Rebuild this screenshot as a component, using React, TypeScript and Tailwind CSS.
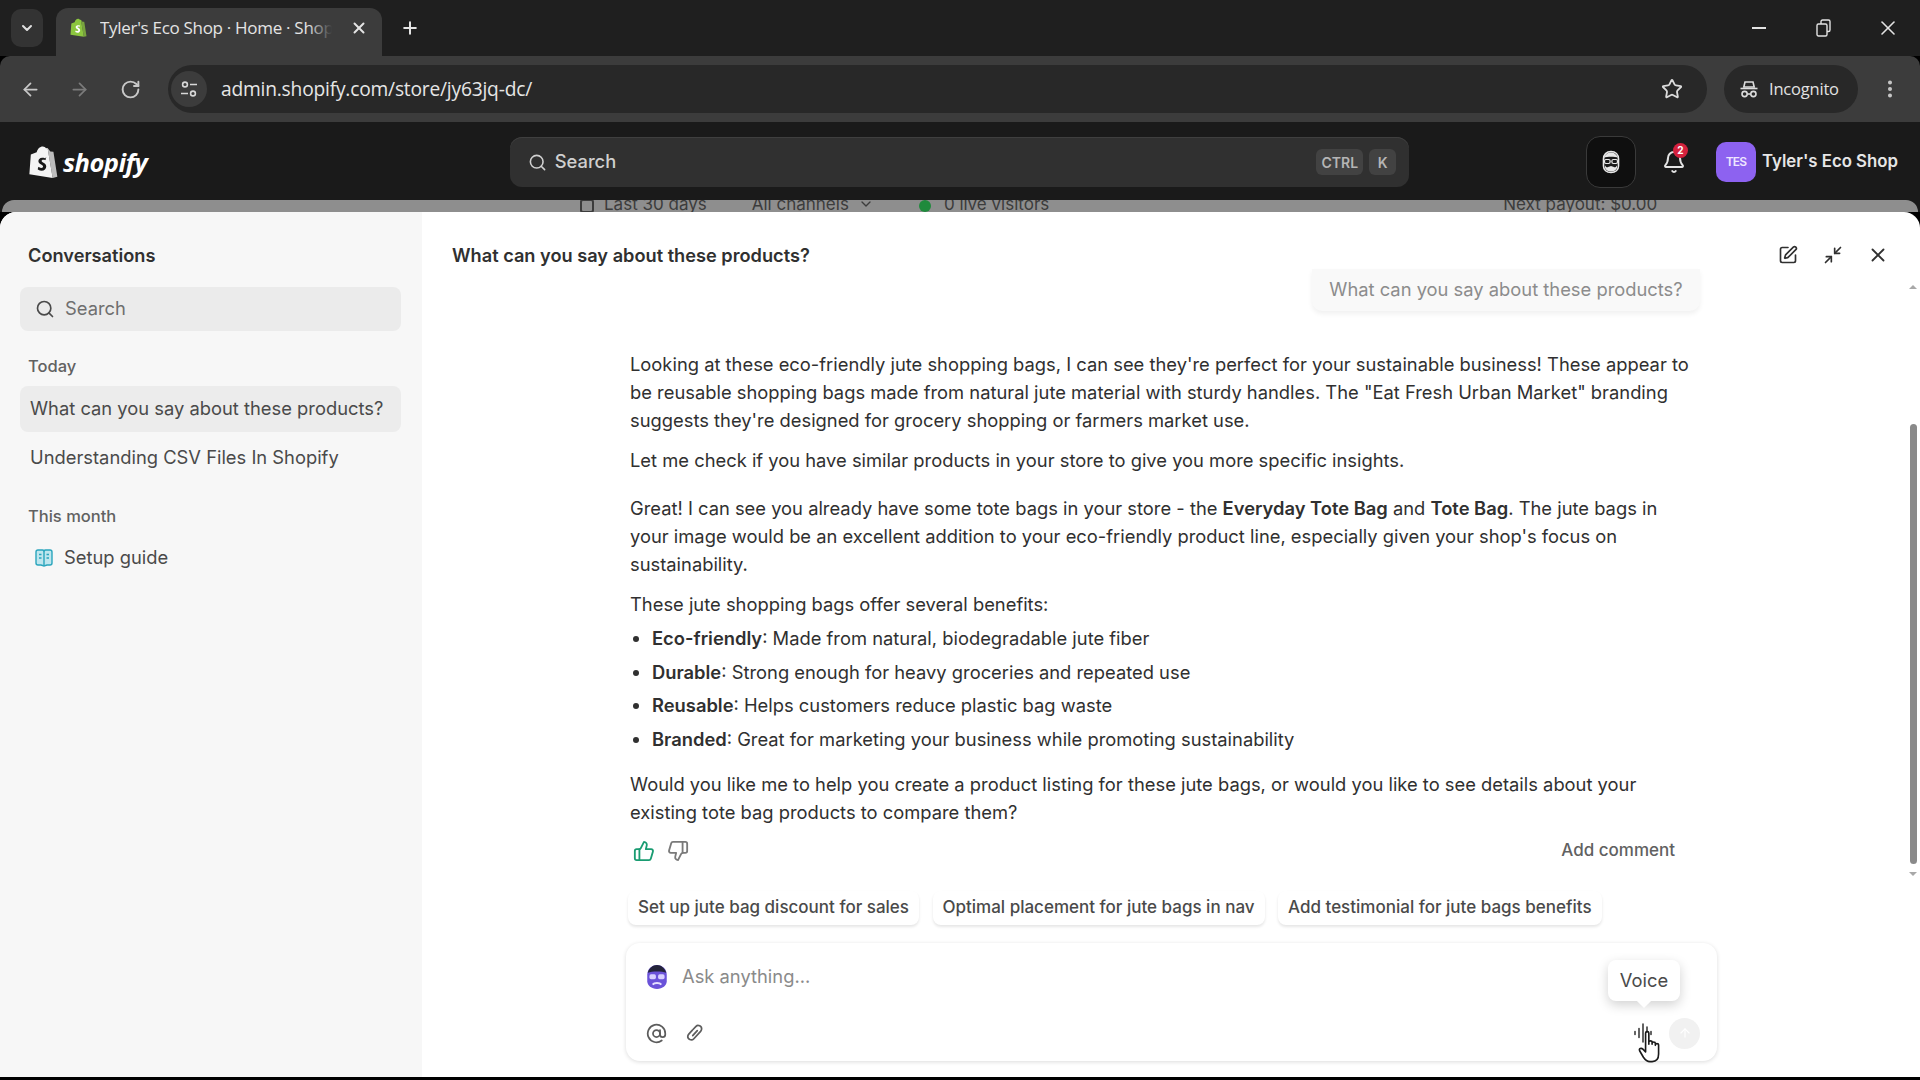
import React from 'react';
import {
  ArrowLeft, ArrowRight, AtSign, Bell, ChevronDown, Minimize2, MoreVertical,
  Plus, RotateCw, Search, SquarePen, Star, ThumbsDown, ThumbsUp, X, ArrowUp,
} from 'lucide-react';

function BagIcon({ size, body, mark }: { size: number; body: string; mark: string }) {
  return (
    <svg width={size} height={size} viewBox="0 0 24 24" fill="none">
      <path d="M4 6.5 8 5c.6-2.4 2.2-4 4.2-4 1 0 1.7.5 2.2 1.3l1.1-.3L19 22.6 3 20 4 6.5Z" fill={body} />
      <path d="M15.5 2 19 22.6l3.2-.8L19.5 4.6l-2.1-.2-1.9-2.4Z" fill={body} opacity="0.75" />
      <path d="M13.8 9.2s-.9-.5-2-.4c-1.8.1-2.6 1.2-2.6 2.3 0 2.1 3.2 2.3 3.2 3.6 0 .5-.4 1-1.2 1-1 0-2-.8-2-.8l-.5 1.7s1 1.1 2.7 1.1c1.9 0 3.2-1.3 3.2-3.1 0-2.5-3.2-2.7-3.2-3.7 0-.3.3-.8 1.2-.8.8 0 1.5.3 1.5.3l.5-2.2Z" fill={mark} />
    </svg>
  );
}

function SiteInfoIcon() {
  return (
    <svg width="20" height="20" viewBox="0 0 20 20" fill="none" stroke="#d8d8d8" strokeWidth="1.6">
      <circle cx="6" cy="5.5" r="2.4" />
      <path d="M11 5.5h7M2 14.5h7" />
      <circle cx="14" cy="14.5" r="2.4" />
    </svg>
  );
}

function IncognitoIcon() {
  return (
    <svg width="20" height="20" viewBox="0 0 20 20" fill="none" stroke="#dcdcdc" strokeWidth="1.6">
      <path d="M6 3h8l1.2 5H4.8L6 3Z" />
      <path d="M1.5 9.5h17" />
      <circle cx="5.6" cy="15" r="2.6" />
      <circle cx="14.4" cy="15" r="2.6" />
      <path d="M8.2 15h3.6" />
    </svg>
  );
}

function RestoreIcon() {
  return (
    <svg width="16" height="18" viewBox="0 0 16 18" fill="none" stroke="#e2e2e2" strokeWidth="1.4">
      <rect x="1" y="5" width="10" height="12" rx="1.5" />
      <path d="M5 5V2.5C5 1.7 5.7 1 6.5 1h6c.9 0 1.5.7 1.5 1.5V11c0 .8-.6 1.5-1.5 1.5H11" />
    </svg>
  );
}

function AttachIcon() {
  return (
    <svg width="20" height="20" viewBox="0 0 20 20" fill="none" stroke="#5c5c5c" strokeWidth="1.7" strokeLinecap="round">
      <path d="M8 6.500 11 3.300c2-2 6-.2 5.600 2.900-.1.900-.5 1.600-1 2.200l-7 7.600c-2 2.100-6.200.4-5.800-2.800.1-.8.500-1.500 1-2.100l3.600-3.900" />
      <path d="m12.300 7.600-4.600 5" />
    </svg>
  );
}

function VoiceIcon() {
  return (
    <svg width="20" height="22" viewBox="0 0 20 22" fill="none" stroke="#303030" strokeWidth="1.500" strokeLinecap="round">
      <path d="M2 9.500v3M6 6.500v9M10 2v18M14 5v12M18 9.500v3" />
    </svg>
  );
}

function SidekickFace({ size, dark }: { size: number; dark?: boolean }) {
  if (dark) {
    return (
      <svg width={size} height={size} viewBox="0 0 24 24" fill="none">
        <path d="M4.500 9c0-4.500 3-7.500 7.500-7.500s7.500 3 7.500 7.500v7c0 4-3 6.500-7.500 6.500S4.500 20 4.500 16V9Z" fill="#1a1a1a" stroke="#e8e8e8" strokeWidth="1.600" />
        <path d="M5 7.500C7 3.500 9.500 2.500 12 2.500S17 3.500 19 7.500c-3-1-11-1-14 0Z" fill="#e8e8e8" />
        <rect x="5.500" y="9.500" width="5.600" height="4" rx="1.400" fill="#1a1a1a" stroke="#e8e8e8" strokeWidth="1.200" />
        <rect x="12.900" y="9.500" width="5.600" height="4" rx="1.400" fill="#1a1a1a" stroke="#e8e8e8" strokeWidth="1.200" />
        <path d="M6 15.500c2 3 2.500 1.500 6 .5 3.500 1 4 2.500 6-.5v2.500c-1 2.500-3.500 3.500-6 3.500s-5-1-6-3.500v-2.500Z" fill="#e8e8e8" />
      </svg>
    );
  }
  return (
    <svg width={size} height={size} viewBox="0 0 24 24" fill="none">
      <path d="M3 10c0-5 4-9 9-9s9 4 9 9v6c0 4-4 7-9 7s-9-3-9-7v-6Z" fill="#6a52d9" />
      <path d="M3.500 8C5 3.500 8.500 1 12 1s7 2.500 8.500 7c-4-1.500-13-1.500-17 0Z" fill="#24243a" />
      <rect x="5" y="9.500" width="6" height="4.500" rx="1.500" fill="#d8d0ff" />
      <rect x="13" y="9.500" width="6" height="4.500" rx="1.500" fill="#d8d0ff" />
      <path d="M8 19c1.500-2 6.500-2 8 0" stroke="#e5e0ff" strokeWidth="1.800" />
    </svg>
  );
}

function SetupGuideIcon() {
  return (
    <svg width="20" height="20" viewBox="0 0 20 20" fill="none">
      <path d="M2 4c0-1 .8-2 2-2h4.500c.7 0 1.200.3 1.500.8.300-.5.800-.8 1.500-.8H16c1.200 0 2 1 2 2v11c0 1-.8 2-2 2h-3l-3 1-3-1H4c-1.200 0-2-1-2-2V4Z" fill="#bfe6ee" stroke="#2aa5bd" strokeWidth="1.400" />
      <path d="M10 3v14M5 6.500h2.500M5 10h2.500M12.500 6.500H15M12.500 10H15" stroke="#2aa5bd" strokeWidth="1.400" />
    </svg>
  );
}

const bullets = [
  ['Eco-friendly', ': Made from natural, biodegradable jute fiber'],
  ['Durable', ': Strong enough for heavy groceries and repeated use'],
  ['Reusable', ': Helps customers reduce plastic bag waste'],
  ['Branded', ': Great for marketing your business while promoting sustainability'],
];

const suggestions = [
  'Set up jute bag discount for sales',
  'Optimal placement for jute bags in nav',
  'Add testimonial for jute bags benefits',
];

export default function App() {
  return (
    <div className="h-[1080px] w-[1920px] overflow-hidden bg-black flex flex-col font-['Inter',sans-serif]">
      {/* Browser tab strip */}
      <div className="h-[56px] shrink-0 bg-[#1f1f1f] flex items-end pl-[11px]">
        <div className="w-[32px] h-[38px] mb-[9px] rounded-[10px] bg-[#333333] flex items-center justify-center">
          <ChevronDown size={16} strokeWidth={3} className="text-[#e0e0e0]" />
        </div>
        <div className="ml-[13px] w-[326px] h-[48px] rounded-t-[12px] bg-[#3c3c3c] flex items-center pl-[12px] pr-[14px] pb-[8px]">
          <BagIcon size={20} body="#8cc63f" mark="#ffffff" />
          <span className="relative ml-[12px] w-[232px] overflow-hidden whitespace-nowrap text-[17px] text-[#e4e4e4] font-['Open_Sans',sans-serif] tracking-[-0.3px]">
            Tyler's Eco Shop · Home · Shopify
            <span className="absolute right-0 top-0 bottom-0 w-[24px] bg-gradient-to-r from-transparent to-[#3c3c3c]" />
          </span>
          <X size={18} strokeWidth={2.6} className="ml-auto text-[#e4e4e4]" />
        </div>
        <Plus size={20} strokeWidth={2.4} className="ml-[18px] mb-[18px] text-[#e4e4e4]" />
        <div className="ml-auto h-[56px] flex items-center text-[#e2e2e2]">
          <div className="w-[14px] h-[2px] bg-[#e2e2e2] mr-[50px]" />
          <RestoreIcon />
          <X size={24} strokeWidth={1.6} className="ml-[44px] mr-[20px]" />
        </div>
      </div>

      {/* Browser toolbar */}
      <div className="h-[66px] shrink-0 bg-[#3c3c3c] rounded-t-[10px] flex items-center pl-[20px] pr-[19px]">
        <ArrowLeft size={21} className="text-[#c8c8c8]" />
        <ArrowRight size={21} className="ml-[28px] text-[#7b7b7b]" />
        <RotateCw size={21} strokeWidth={2.2} className="ml-[30px] text-[#c8c8c8]" />
        <div className="ml-[27px] w-[1539px] h-[48px] rounded-full bg-[#282828] flex items-center pl-[3px] pr-[24px]">
          <div className="w-[36px] h-[36px] rounded-full bg-[#3c3c3c] flex items-center justify-center">
            <SiteInfoIcon />
          </div>
          <span className="ml-[14px] text-[19.200px] text-[#e6e6e6] font-['Open_Sans',sans-serif] tracking-[-0.2px]">
            admin.shopify.com/store/jy63jq-dc/
          </span>
          <Star size={22} strokeWidth={2} className="ml-auto text-[#dcdcdc]" />
        </div>
        <div className="ml-[17px] w-[134px] h-[48px] rounded-full bg-[#282828] flex items-center pl-[15px]">
          <IncognitoIcon />
          <span className="ml-[10px] text-[16.500px] text-[#e2e2e2] font-['Open_Sans',sans-serif] tracking-[-0.2px]">Incognito</span>
        </div>
        <MoreVertical size={22} strokeWidth={2.4} className="ml-auto text-[#c8c8c8]" />
      </div>

      {/* Shopify admin bar */}
      <div className="h-[78px] shrink-0 bg-[#1a1a1a] flex items-center pl-[25px] pr-[22px] pt-[2px]">
        <BagIcon size={35} body="#f4f4f4" mark="#1a1a1a" />
        <span className="ml-[3px] text-[25.500px] font-bold italic text-white tracking-[-0.5px] font-['Open_Sans',sans-serif] w-[447px]">shopify</span>
        <div className="w-[900px] h-[50px] rounded-[12px] bg-[#303030] flex items-center pl-[18px] pr-[13px] shadow-[0_1px_0_#3f3f3f_inset]">
          <Search size={19} className="text-[#d0d0d0]" />
          <span className="ml-[8px] text-[18.350px] font-medium text-[#cfcfcf]">Search</span>
          <div className="ml-auto h-[26px] px-[5px] rounded-[6px] bg-[#424242] flex items-center text-[14px] font-semibold text-[#b5b5b5]">CTRL</div>
          <div className="ml-[6px] h-[26px] w-[27px] rounded-[6px] bg-[#424242] flex items-center justify-center text-[14px] font-semibold text-[#b5b5b5]">K</div>
        </div>
        <div className="ml-[177px] w-[50px] h-[52px] rounded-[14px] bg-[#0f0f0f] border border-[#3a3a3a] flex items-center justify-center">
          <SidekickFace size={24} dark />
        </div>
        <div className="relative ml-[26px] w-[24px] h-[24px]">
          <Bell size={24} className="text-[#e3e3e3]" />
          <span className="absolute -top-[7px] left-[11px] w-[15px] h-[15px] rounded-full bg-[#d4213d] flex items-center justify-center text-[10px] font-bold text-white">2</span>
        </div>
        <div className="ml-[30px] w-[40px] h-[40px] rounded-[10px] bg-[#8d62f0] flex items-center justify-center text-[12px] font-semibold text-[#efe6ff] tracking-[-0.8px]">TES</div>
        <span className="ml-[6px] text-[16.800px] font-semibold text-[#e6e6e6] whitespace-nowrap">Tyler's Eco Shop</span>
      </div>

      {/* Dimmed page behind the panel */}
      <div className="h-[12px] shrink-0 bg-[#1a1a1a]">
        <div className="h-[12px] overflow-hidden rounded-t-[12px] mx-[2px] bg-[#8e8e8e] flex items-start pl-[578px] text-[17px] text-[#3c3c3c]">
          <span className="-mt-[1px] w-[14px] h-[14px] rounded-[3px] border-2 border-[#3c3c3c]" />
          <span className="-mt-[8px] ml-[10px] whitespace-nowrap">Last 30 days</span>
          <span className="-mt-[8px] ml-[45px] whitespace-nowrap">All channels</span>
          <ChevronDown size={16} className="-mt-[4px] ml-[9px]" />
          <span className="mt-[0px] ml-[45px] w-[12px] h-[12px] rounded-full bg-[#1f8a3c]" />
          <span className="-mt-[8px] ml-[13px] whitespace-nowrap">0 live visitors</span>
          <span className="-mt-[8px] ml-[454px] whitespace-nowrap">Next payout: $0.00</span>
        </div>
      </div>

      {/* Sidekick panel */}
      <div className="relative h-[865px] shrink-0 rounded-t-[16px] overflow-hidden bg-white flex">
        <aside className="w-[422px] shrink-0 bg-[#f7f7f7] pt-[32px] px-[20px]">
          <h2 className="px-[8px] text-[18.200px] leading-[22px] font-semibold text-[#303030]">Conversations</h2>
          <div className="mt-[21px] h-[44px] w-[381px] rounded-[8px] bg-[#ebebeb] flex items-center pl-[15px]">
            <Search size={20} className="text-[#4a4a4a]" />
            <span className="ml-[10px] text-[18.350px] text-[#6f6f6f]">Search</span>
          </div>
          <h3 className="mt-[25px] px-[8px] text-[16.500px] leading-[20px] font-medium text-[#616161]">Today</h3>
          <div className="mt-[10px] h-[46px] w-[381px] rounded-[8px] bg-[#ececec] flex items-center px-[10px] text-[18.350px] text-[#4a4a4a] whitespace-nowrap">
            What can you say about these products?
          </div>
          <div className="mt-[3px] h-[46px] flex items-center px-[10px] text-[18.350px] text-[#4a4a4a] whitespace-nowrap">
            Understanding CSV Files In Shopify
          </div>
          <h3 className="mt-[25px] px-[8px] text-[16.500px] leading-[20px] font-medium text-[#616161]">This month</h3>
          <div className="mt-[9px] h-[46px] flex items-center pl-[14px] text-[18.350px] text-[#4a4a4a]">
            <SetupGuideIcon />
            <span className="ml-[10px]">Setup guide</span>
          </div>
        </aside>

        <main className="flex-1 min-w-0 flex flex-col">
          <header className="h-[58px] shrink-0 flex items-end pb-[1px] pl-[30px] pr-[17px]">
            <h1 className="text-[18.200px] leading-[28px] font-semibold text-[#303030]">What can you say about these products?</h1>
            <SquarePen size={20} className="ml-auto mb-[4px] text-[#303030]" />
            <Minimize2 size={20} className="ml-[25px] mb-[4px] text-[#303030]" />
            <X size={22} className="ml-[24px] mb-[3px] text-[#303030]" />
          </header>

          <div className="flex-1 min-h-0 pl-[208px] pr-[206px]">
            <div className="flex justify-end -mt-[1px]">
              <div className="h-[42px] w-[388px] rounded-b-[10px] bg-[#f9f9f9] shadow-[0_3px_5px_rgba(0,0,0,0.06)] flex items-center justify-center text-[18.350px] text-[#8c8c8c] whitespace-nowrap">
                What can you say about these products?
              </div>
            </div>
            <div className="w-[1064px] text-[18.350px] leading-[28px] text-[#303030]">
              <p className="mt-[39px]">
                Looking at these eco-friendly jute shopping bags, I can see they're perfect for your sustainable business! These appear to be reusable shopping bags made from natural jute material with sturdy handles. The "Eat Fresh Urban Market" branding suggests they're designed for grocery shopping or farmers market use.
              </p>
              <p className="mt-[12px]">Let me check if you have similar products in your store to give you more specific insights.</p>
              <p className="mt-[20px]">
                Great! I can see you already have some tote bags in your store - the <b className="font-semibold">Everyday Tote Bag</b> and <b className="font-semibold">Tote Bag</b>. The jute bags in your image would be an excellent addition to your eco-friendly product line, especially given your shop's focus on sustainability.
              </p>
              <p className="mt-[12px]">These jute shopping bags offer several benefits:</p>
              <ul className="mt-[6px] flex flex-col gap-[5.700px] list-disc pl-[22px]">
                {bullets.map(([name, rest]) => (
                  <li key={name}>
                    <b className="font-semibold">{name}</b>{rest}
                  </li>
                ))}
              </ul>
              <p className="mt-[17px]">
                Would you like me to help you create a product listing for these jute bags, or would you like to see details about your existing tote bag products to compare them?
              </p>
            </div>
            <div className="mt-[13px] flex items-center w-[1045px] h-[24px] pl-[3px]">
              <ThumbsUp size={22} className="text-[#1a9c72]" />
              <ThumbsDown size={22} className="ml-[12px] text-[#7a7a7a]" />
              <span className="ml-auto text-[17px] font-medium text-[#616161]">Add comment</span>
            </div>
            <div className="mt-[28px] -ml-[2px] flex gap-[13.500px]">
              {suggestions.map((s) => (
                <div key={s} className="h-[34px] px-[10px] rounded-[8px] bg-white shadow-[0_2px_3px_rgba(0,0,0,0.10)] flex items-center text-[17px] font-medium text-[#4a4a4a] whitespace-nowrap">
                  {s}
                </div>
              ))}
            </div>
            <div className="relative mt-[18px] -ml-[4px] w-[1091px] h-[118px] rounded-[14px] bg-white shadow-[0_1px_4px_rgba(0,0,0,0.14)] pl-[18px] pr-[17px] pt-[20px]">
              <div className="flex items-center h-[28px]">
                <SidekickFace size={26} />
                <span className="ml-[12px] text-[18.350px] text-[#8a8a8a]">Ask anything...</span>
              </div>
              <div className="mt-[28px] flex items-center h-[28px] pl-[2px]">
                <AtSign size={21} className="text-[#5c5c5c]" />
                <span className="ml-[18px]"><AttachIcon /></span>
                <span className="ml-auto mr-[1px]"><VoiceIcon /></span>
                <div className="ml-[15px] w-[31px] h-[31px] rounded-full bg-[#f1f1f1] flex items-center justify-center">
                  <ArrowUp size={14} className="text-white" />
                </div>
              </div>
              {/* Voice tooltip */}
              <div className="absolute top-[17px] right-[37px] h-[41px] w-[72px] rounded-[8px] bg-white shadow-[0_4px_12px_rgba(0,0,0,0.18)] flex items-center justify-center text-[18.350px] text-[#4a4a4a]">
                Voice
                <span className="absolute -bottom-[5px] left-[31px] w-[10px] h-[10px] rotate-45 bg-white" />
              </div>
              {/* Mouse cursor */}
              <svg className="absolute top-[87px] right-[53px]" width="26" height="35" viewBox="0 0 24 32" fill="#ffffff" stroke="#1a1a1a" strokeWidth="1.500" strokeLinejoin="round">
                <path d="M7 2.500c0-1.500 3-1.500 3 0V13l0-2c0-1.500 3-1.500 3 0v2-1c0-1.500 3-1.500 3 0v2-.5c0-1.500 3-1.500 3 0V22c0 4-2 7-6 7h-2c-3 0-4-1-6-4l-3.500-6c-1-2 1.500-3 3-1.500L7 20V2.500Z" />
              </svg>
            </div>
          </div>
        </main>

        {/* Scrollbar */}
        <div className="w-[14px] shrink-0 flex flex-col items-center pt-[73px]">
          <div className="w-0 h-0 border-x-[4px] border-x-transparent border-b-[4px] border-b-[#a8a8a8]" />
          <div className="mt-[135px] w-[7px] h-[440px] rounded-full bg-[#8a8a8a]" />
          <div className="mt-[8px] w-0 h-0 border-x-[4px] border-x-transparent border-t-[4px] border-t-[#a8a8a8]" />
        </div>
      </div>
    </div>
  );
}
